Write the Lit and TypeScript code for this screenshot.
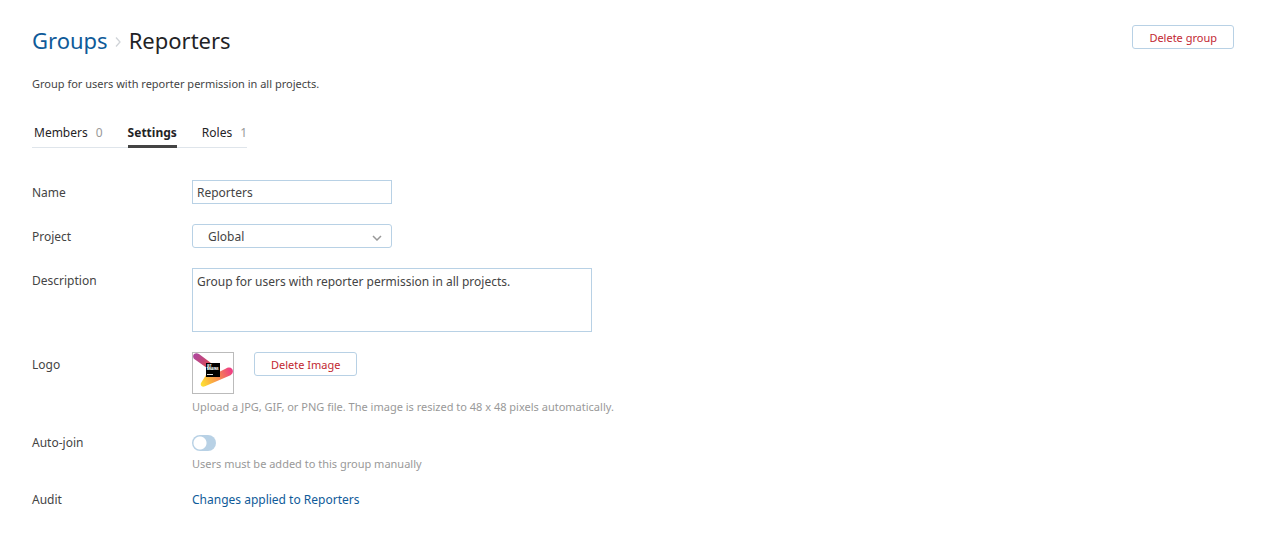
import { LitElement, html, css, svg } from "lit";
import { customElement, state } from "lit/decorators.js";

const logo = svg`
  <svg class="logo-art" viewBox="0 0 40 40" aria-hidden="true">
    <defs>
      <linearGradient id="warm" gradientUnits="userSpaceOnUse" x1="9" y1="32" x2="38" y2="17">
        <stop offset="0" stop-color="#fde034" />
        <stop offset="0.3" stop-color="#fbb040" />
        <stop offset="0.65" stop-color="#f47a59" />
        <stop offset="1" stop-color="#ee3f84" />
      </linearGradient>
      <linearGradient id="cool" gradientUnits="userSpaceOnUse" x1="2" y1="2" x2="16" y2="14">
        <stop offset="0" stop-color="#b0489b" />
        <stop offset="0.5" stop-color="#c2477c" />
        <stop offset="1" stop-color="#df4f4c" />
      </linearGradient>
    </defs>
    <path fill="url(#cool)" d="M0.8 1.2C2.2-.2 4.6-.1 6 1l12 9-4 5L1.600 6.200C0 5-.4 2.600.8 1.200Z" />
    <path fill="url(#warm)" d="M13 22 8 30c-1.200 2.800 1.600 4.600 4 3.200L37.500 22.200c4-2.200 2.800-8-1.800-7.600-1 .1-2 .5-2.700 1L24 20Z" />
    <rect x="13" y="10" width="14" height="14" fill="#000" />
    <text class="logo-text" x="14" y="14">JET</text>
    <text class="logo-text" x="14" y="17">BRAINS</text>
    <rect x="14" y="21" width="6" height="1" fill="#ddd" />
  </svg>`;

@customElement("app-root")
export class AppRoot extends LitElement {
  @state() private autoJoin = false;

  static styles = css`
    :host {
      display: block;
      box-sizing: border-box;
      padding: 24px 32px;
      background: #fff;
      color: #444;
      font: 12px/24px "Noto Sans", "Open Sans", sans-serif;
    }
    a { color: #0f5b99; text-decoration: none; }
    .header { display: flex; justify-content: space-between; align-items: flex-start; }
    .title {
      display: flex;
      align-items: center;
      margin: 0;
      color: #1f2326;
      font-size: 22px;
      line-height: 32px;
      font-weight: 400;
    }
    .separator { width: 8px; height: 12px; margin: 3px 7px 0 6px; }
    .button {
      box-sizing: border-box;
      height: 24px;
      padding: 1px 16px 0;
      border: 1px solid #b8d1e5;
      border-radius: 3px;
      background: #fff;
      color: #c22731;
      font: inherit;
      font-size: 11px;
      line-height: 20px;
    }
    .header .button { margin-top: 1px; }
    .summary { margin: 18px 0 0; font-size: 11px; line-height: 20px; }
    .tabs {
      display: inline-flex;
      gap: 25px;
      margin: 28px 0 32px;
      box-shadow: inset 0 -1px #dfe5eb;
    }
    .tab {
      display: flex;
      gap: 8px;
      box-sizing: border-box;
      height: 26px;
      padding: 0 0 0 2px;
      line-height: 22px;
      color: #1f2326;
    }
    .tab.selected { padding: 0; border-bottom: 3px solid #444; font-weight: 700; }
    .tab:last-child { padding: 0; }
    .count { color: #999; }
    .row {
      display: grid;
      grid-template-columns: 160px minmax(0, 1fr);
      margin-bottom: 20px;
    }
    .row.hinted { margin-bottom: 14px; }
    .caption { padding-top: 2px; line-height: 22px; }
    .field { display: flex; align-items: flex-start; }
    .box {
      box-sizing: border-box;
      width: 200px;
      height: 24px;
      margin: 0;
      padding: 0 4px;
      border: 1px solid #b8d1e5;
      border-radius: 0;
      background: #fff;
      color: #444;
      font: inherit;
      line-height: 20px;
      outline: 0;
    }
    .box.area { width: 400px; height: 64px; padding-top: 3px; resize: none; display: block; }
    .select { display: grid; width: 200px; }
    .select > * { grid-area: 1 / 1; }
    .box.picker { appearance: none; padding: 2px 15px 0; border-radius: 3px; }
    .chevron {
      width: 10px;
      height: 6px;
      justify-self: end;
      align-self: center;
      margin: 3px 10px 0 0;
      pointer-events: none;
    }
    .logo {
      box-sizing: border-box;
      width: 42px;
      height: 42px;
      margin-right: 20px;
      border: 1px solid #bbb;
    }
    .logo-art { display: block; width: 40px; height: 40px; }
    .logo-text { font: 800 3px "Open Sans", sans-serif; fill: #fff; }
    .hint { margin: 0; color: #999; font-size: 11px; line-height: 18px; }
    .logo-hint { margin-top: 4px; }
    .toggle {
      appearance: none;
      width: 24px;
      height: 16px;
      margin: 5px 0 4px;
      border-radius: 8px;
      background: radial-gradient(circle at 8px 8px, #fff 6px, #b8d1e5 7px);
    }
    .toggle:checked { background: radial-gradient(circle at 16px 8px, #fff 6px, #008eff 7px); }
  `;

  render() {
    return html`
      <header class="header">
        <h1 class="title">
          <a href="#groups">Groups</a>
          <svg class="separator" viewBox="0 0 8 12" fill="none" stroke="#d0d4d8" stroke-width="1.300" aria-hidden="true">
            <path d="M2 1.500 6 6 2 10.500" />
          </svg>
          <span>Reporters</span>
        </h1>
        <button class="button" type="button">Delete group</button>
      </header>
      <p class="summary">Group for users with reporter permission in all projects.</p>
      <nav class="tabs">
        <a class="tab" href="#members">Members <span class="count">0</span></a>
        <a class="tab selected" href="#settings" aria-current="page">Settings</a>
        <a class="tab" href="#roles">Roles <span class="count">1</span></a>
      </nav>
      <form>
        <div class="row">
          <label class="caption" for="name">Name</label>
          <div class="field"><input class="box" id="name" type="text" value="Reporters" /></div>
        </div>
        <div class="row">
          <label class="caption" for="project">Project</label>
          <div class="select">
            <select class="box picker" id="project"><option>Global</option></select>
            <svg class="chevron" viewBox="0 0 10 6" fill="none" stroke="#999" stroke-width="1.500" aria-hidden="true">
              <path d="M1 1 5 5 9 1" />
            </svg>
          </div>
        </div>
        <div class="row">
          <label class="caption" for="description">Description</label>
          <textarea class="box area" id="description" .value=${"Group for users with reporter permission in all projects."}></textarea>
        </div>
        <div class="row hinted">
          <span class="caption">Logo</span>
          <div>
            <div class="field">
              <div class="logo">${logo}</div>
              <button class="button" type="button">Delete Image</button>
            </div>
            <p class="hint logo-hint">Upload a JPG, GIF, or PNG file. The image is resized to 48 x 48 pixels automatically.</p>
          </div>
        </div>
        <div class="row hinted">
          <label class="caption" for="auto">Auto-join</label>
          <div>
            <div class="field">
              <input class="toggle" id="auto" type="checkbox" .checked=${this.autoJoin}
                @change=${(e: Event) => (this.autoJoin = (e.target as HTMLInputElement).checked)} />
            </div>
            <p class="hint">Users must be added to this group manually</p>
          </div>
        </div>
        <div class="row">
          <span class="caption">Audit</span>
          <a class="caption" href="#audit">Changes applied to Reporters</a>
        </div>
      </form>
    `;
  }
}
